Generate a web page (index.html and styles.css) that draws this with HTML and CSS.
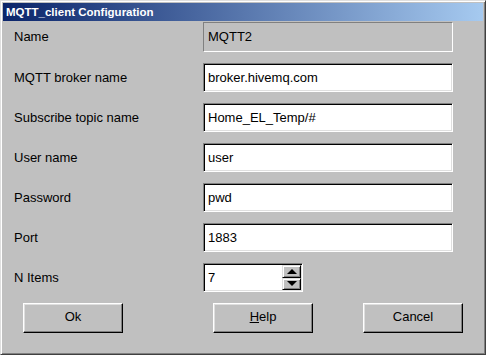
FILE: index.html
```html
<!DOCTYPE html>
<html lang="en">
<head>
  <meta charset="UTF-8">
  <meta name="viewport" content="width=device-width, initial-scale=1.0">
  <title>MQTT_client Configuration</title>
  <link rel="stylesheet" href="styles.css">
</head>
<body>
  <div class="window">
    <div class="titlebar">MQTT_client Configuration</div>
    <form class="dialog" id="configForm">
      <div class="row row-name">
        <span class="label">Name</span>
        <div class="static">MQTT2</div>
      </div>
      <div class="row">
        <label for="broker" class="label">MQTT broker name</label>
        <input type="text" id="broker" value="broker.hivemq.com">
      </div>
      <div class="row">
        <label for="topic" class="label">Subscribe topic name</label>
        <input type="text" id="topic" value="Home_EL_Temp/#">
      </div>
      <div class="row">
        <label for="user" class="label">User name</label>
        <input type="text" id="user" value="user">
      </div>
      <div class="row">
        <label for="pwd" class="label">Password</label>
        <input type="text" id="pwd" value="pwd">
      </div>
      <div class="row">
        <label for="port" class="label">Port</label>
        <input type="text" id="port" value="1883">
      </div>
      <div class="row">
        <label for="items" class="label">N Items</label>
        <div class="spin">
          <input type="text" id="items" value="7">
          <div class="spin-buttons">
            <span class="spin-btn"><i class="arrow-up"></i></span>
            <span class="spin-btn"><i class="arrow-down"></i></span>
          </div>
        </div>
      </div>
      <div class="buttons">
        <button type="button" class="btn btn-ok">Ok</button>
        <button type="button" class="btn btn-help"><u>H</u>elp</button>
        <button type="button" class="btn btn-cancel">Cancel</button>
      </div>
    </form>
  </div>
</body>
</html>
```

FILE: styles.css
```css
html, body {
  margin: 0;
  padding: 0;
  background: #c0c0c0;
}
body {
  font-family: "Liberation Sans", Arial, sans-serif;
  font-size: 13px;
  color: #000;
}
.window {
  width: 486px;
  height: 355px;
  box-sizing: border-box;
  background: #c0c0c0;
  border: 1px solid;
  border-color: #dfdfdf #404040 #404040 #dfdfdf;
  box-shadow: inset 1px 1px #fff, inset -1px -1px #808080;
  padding: 2px;
}
.titlebar {
  height: 18px;
  line-height: 18px;
  padding-left: 3px;
  background: linear-gradient(to right, #0a246a, #a6caf0);
  color: #fff;
  font-weight: bold;
  font-size: 11.5px;
}
.dialog {
  padding: 1px 0 0 11px;
}
.row {
  display: grid;
  grid-template-columns: 189px 250px;
  align-items: center;
  height: 29px;
  margin-top: 11px;
}
.row-name {
  height: 30px;
  margin-top: 0;
}
.label {
  padding-bottom: 1px;
}
.static {
  height: 30px;
  box-sizing: border-box;
  border: 1px solid;
  border-color: #808080 #fff #fff #808080;
  padding: 6px 0 0 4px;
}
input {
  width: 250px;
  height: 29px;
  box-sizing: border-box;
  border: 1px solid;
  border-color: #808080 #fff #fff #808080;
  box-shadow: inset 1px 1px #000, inset -1px -1px #dfdfdf;
  background: #fff;
  font-family: inherit;
  font-size: 13px;
  color: #000;
  padding: 0 3px 1px 4px;
  outline: none;
  margin: 0;
}
.spin {
  position: relative;
  width: 100px;
  height: 29px;
}
.spin input {
  width: 100px;
}
.spin-buttons {
  position: absolute;
  top: 2px;
  right: 2px;
  width: 19px;
  height: 25px;
  display: flex;
  flex-direction: column;
}
.spin-btn {
  flex: 1;
  display: flex;
  align-items: center;
  justify-content: center;
  background: #c0c0c0;
  box-sizing: border-box;
  border: 1px solid;
  border-color: #dfdfdf #000 #000 #dfdfdf;
  box-shadow: inset 1px 1px #fff, inset -1px -1px #808080;
}
.arrow-up, .arrow-down {
  width: 0;
  height: 0;
  border-left: 5px solid transparent;
  border-right: 5px solid transparent;
}
.arrow-up {
  border-bottom: 5px solid #000;
}
.arrow-down {
  border-top: 5px solid #000;
}
.buttons {
  display: flex;
  margin-top: 11px;
  padding-left: 9px;
}
.btn {
  width: 100px;
  height: 30px;
  box-sizing: border-box;
  background: #c0c0c0;
  border: 1px solid;
  border-color: #fff #000 #000 #fff;
  box-shadow: inset -1px -1px #808080, inset 1px 1px #dfdfdf;
  font-family: inherit;
  font-size: 13px;
  color: #000;
  padding: 0 0 3px;
}
.btn-help {
  margin-left: 90px;
}
.btn-cancel {
  margin-left: 50px;
}
```
